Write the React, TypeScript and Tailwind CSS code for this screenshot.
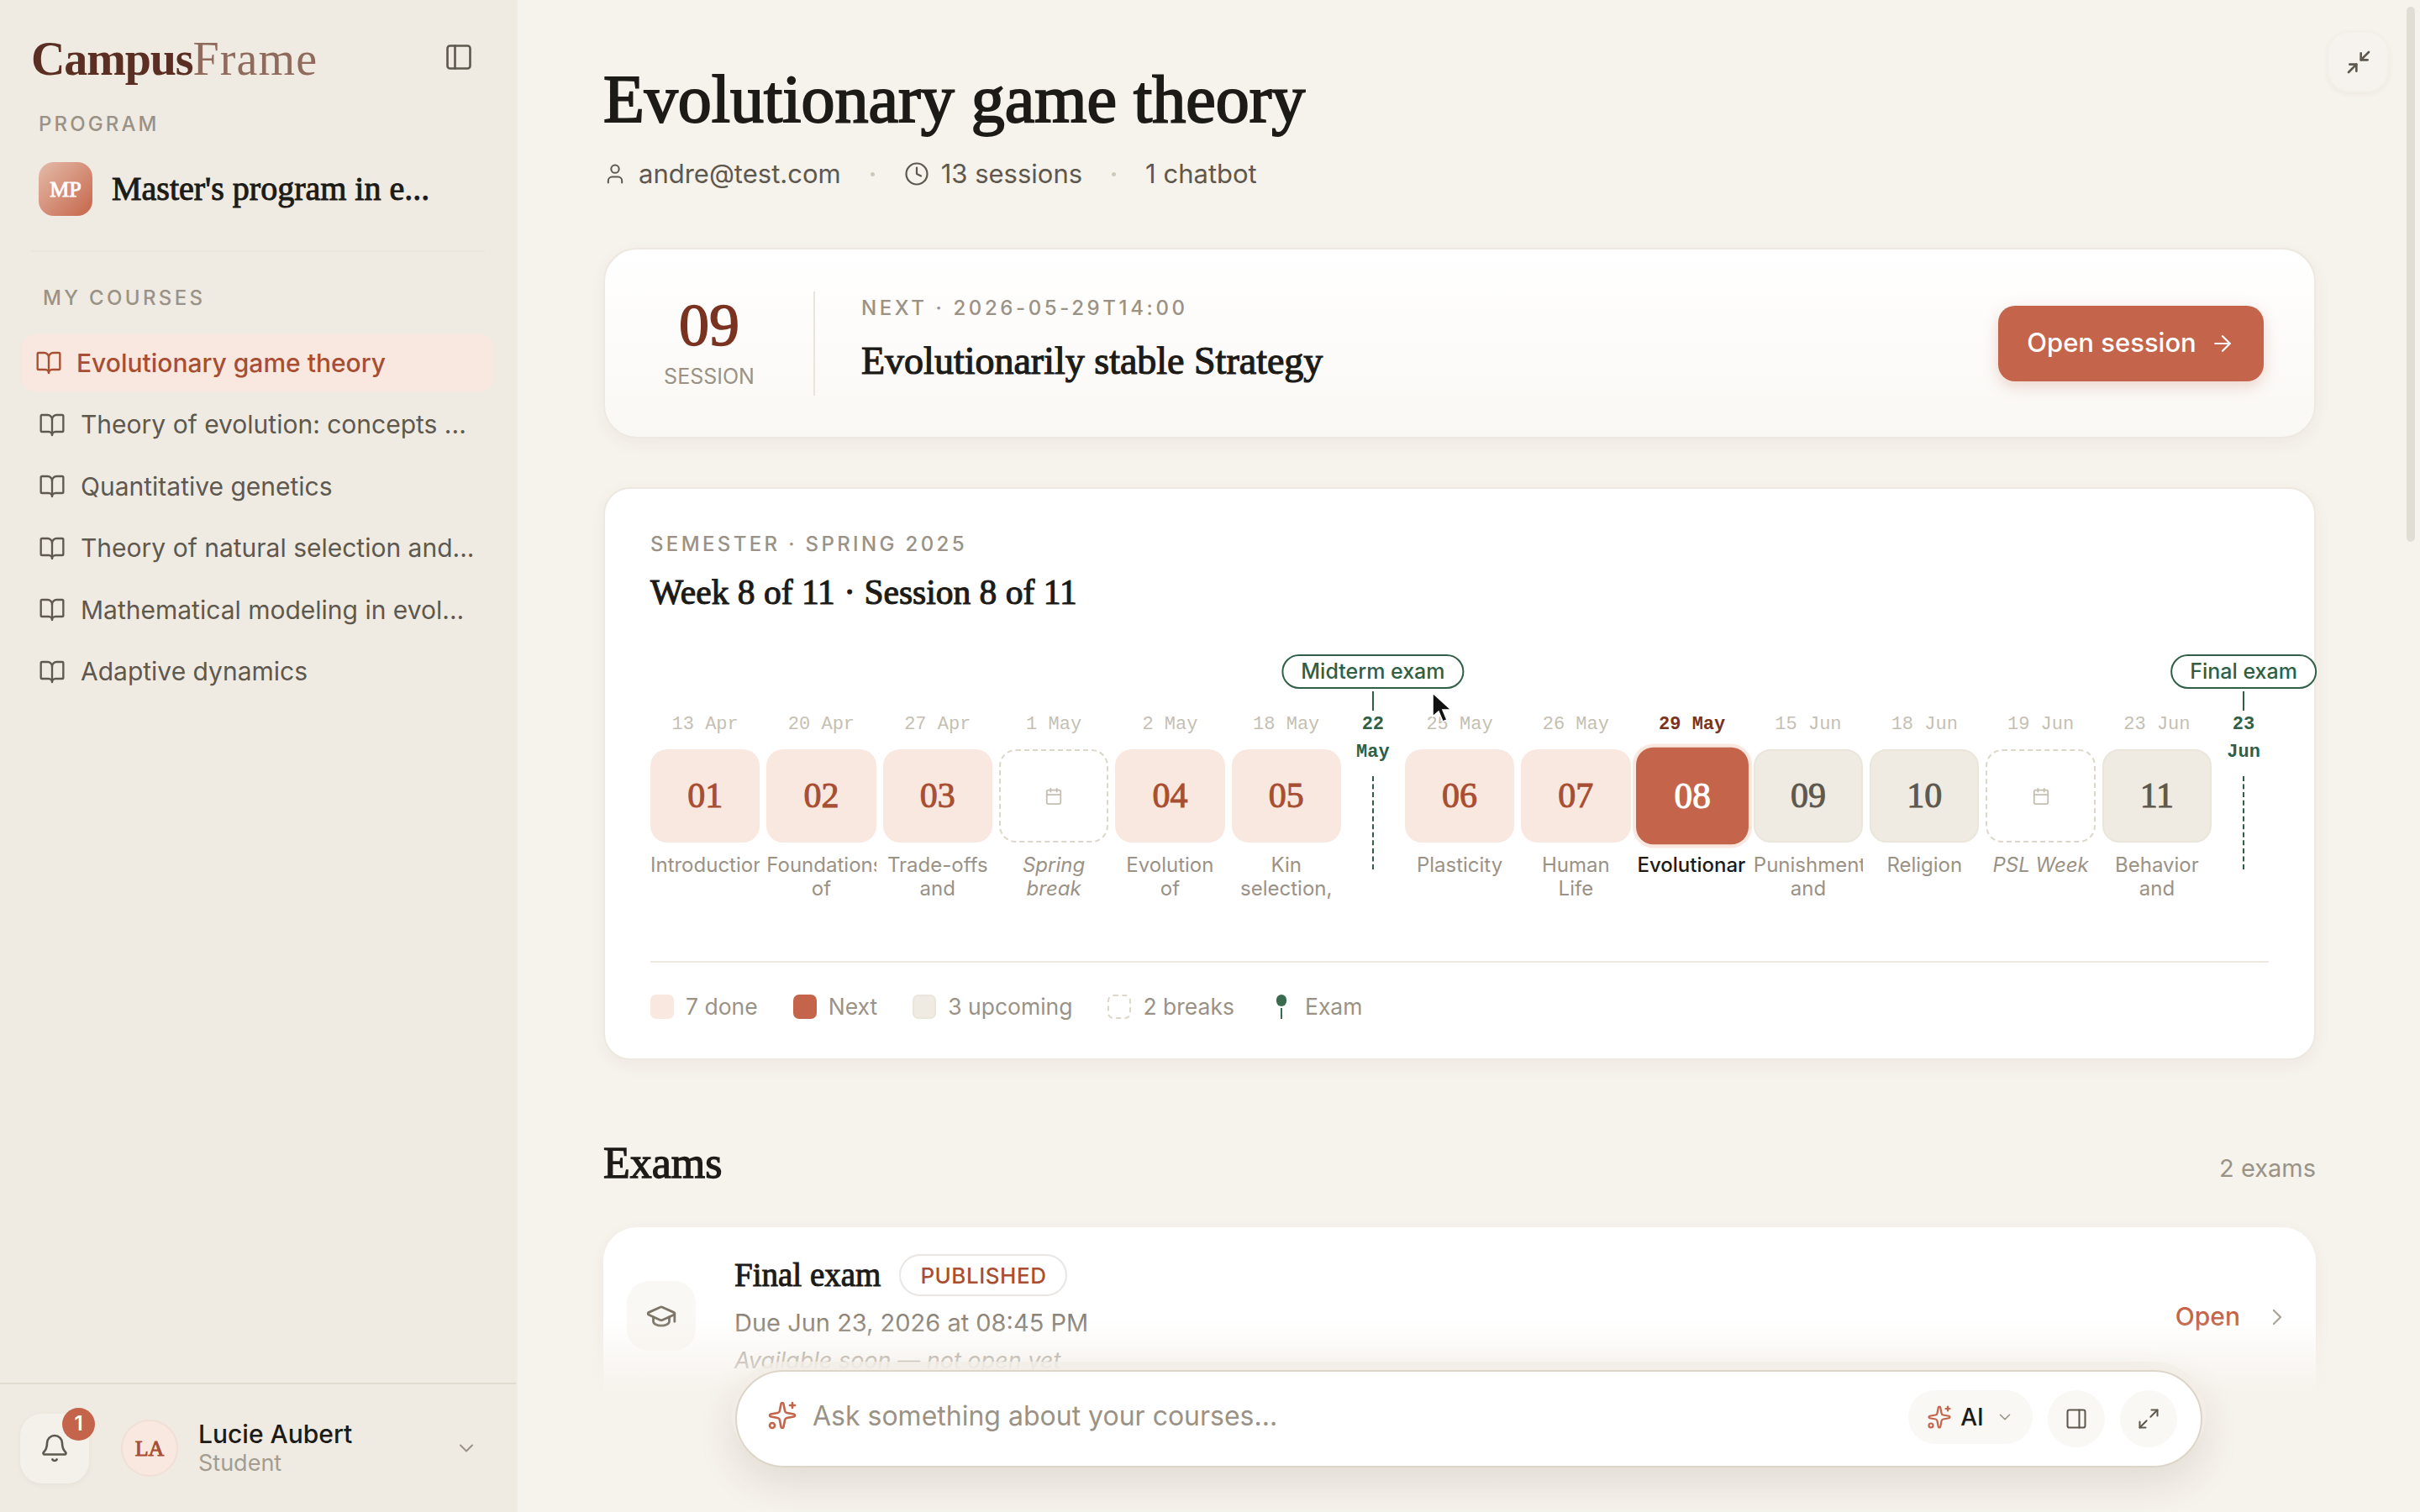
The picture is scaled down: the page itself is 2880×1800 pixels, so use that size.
import {
  ArrowRight,
  Bell,
  BookOpen,
  Calendar,
  ChevronDown,
  ChevronRight,
  Clock,
  GraduationCap,
  Maximize2,
  Minimize2,
  PanelLeft,
  PanelRight,
  Sparkles,
  User,
} from "lucide-react";

const SERIF = "font-['Liberation_Serif',serif] font-normal";
const MONO = "font-['Liberation_Mono',monospace]";

const courses = [
  "Evolutionary game theory",
  "Theory of evolution: concepts ...",
  "Quantitative genetics",
  "Theory of natural selection and...",
  "Mathematical modeling in evol...",
  "Adaptive dynamics",
];

type Cell =
  | { kind: "done" | "next" | "todo"; n: string; date: string; title: string }
  | { kind: "break"; date: string; title: string }
  | { kind: "exam"; day: string; month: string; label: string };

const cells: Cell[] = [
  { kind: "done", n: "01", date: "13 Apr", title: "Introduction" },
  { kind: "done", n: "02", date: "20 Apr", title: "Foundations of" },
  { kind: "done", n: "03", date: "27 Apr", title: "Trade-offs and" },
  { kind: "break", date: "1 May", title: "Spring break" },
  { kind: "done", n: "04", date: "2 May", title: "Evolution of" },
  { kind: "done", n: "05", date: "18 May", title: "Kin selection," },
  { kind: "exam", day: "22", month: "May", label: "Midterm exam" },
  { kind: "done", n: "06", date: "25 May", title: "Plasticity" },
  { kind: "done", n: "07", date: "26 May", title: "Human\nLife" },
  { kind: "next", n: "08", date: "29 May", title: "Evolutionarily" },
  { kind: "todo", n: "09", date: "15 Jun", title: "Punishment and" },
  { kind: "todo", n: "10", date: "18 Jun", title: "Religion" },
  { kind: "break", date: "19 Jun", title: "PSL Week" },
  { kind: "todo", n: "11", date: "23 Jun", title: "Behavior and" },
  { kind: "exam", day: "23", month: "Jun", label: "Final exam" },
];

function TimelineCell({ cell }: { cell: Cell }) {
  if (cell.kind === "exam") {
    return (
      <div className="relative flex w-[60px] shrink-0 flex-col items-center">
        <span className="absolute top-[-67px] left-1/2 flex h-[41px] -translate-x-1/2 items-center rounded-full border-2 border-[#2F5F46] bg-white px-[21px] text-[25px] font-medium whitespace-nowrap text-[#2F5F46]">
          {cell.label}
        </span>
        <span className="absolute top-[-23px] left-1/2 h-[23px] w-[2px] -translate-x-1/2 bg-[#2F5F46]" />
        <span className={`${MONO} text-center text-[22px] leading-[33px] font-bold text-[#2F5F46]`}>
          {cell.day}
          <br />
          {cell.month}
        </span>
        <span className="mt-[12px] h-[111px] border-l-2 border-dashed border-[#2F5F46]" />
      </div>
    );
  }

  const isNext = cell.kind === "next";
  const isBreak = cell.kind === "break";

  return (
    <div className="min-w-0 flex-1 basis-0">
      <div
        className={`${MONO} h-[33px] text-center text-[22px] leading-[33px] ${
          isNext ? "font-bold text-[#7A3320]" : "text-[#C5BFB3]"
        }`}
      >
        {cell.date}
      </div>
      <div className="mt-[13px]">
        {cell.kind === "done" && (
          <div className={`${SERIF} flex h-[111px] items-center justify-center rounded-[20px] bg-[#F8E8E0] text-[42px] text-[#A84E32] [-webkit-text-stroke:1px]`}>
            {cell.n}
          </div>
        )}
        {isNext && (
          <div className={`${SERIF} flex h-[111px] scale-x-[1.03] scale-y-[1.04] items-center justify-center rounded-[20px] bg-[#C4654B] text-[42px] text-white ring-4 ring-[#F8E8E0] [-webkit-text-stroke:1px]`}>
            {"n" in cell ? cell.n : ""}
          </div>
        )}
        {cell.kind === "todo" && (
          <div className={`${SERIF} flex h-[111px] items-center justify-center rounded-[20px] border-2 border-[#EAE6DA] bg-[#EFEBE3] text-[42px] text-[#5E584E] [-webkit-text-stroke:1px]`}>
            {cell.n}
          </div>
        )}
        {isBreak && (
          <div className="flex h-[111px] items-center justify-center rounded-[20px] border-2 border-dashed border-[#DDD7CA] text-[#C5BFB3]">
            <Calendar size={22} strokeWidth={2} />
          </div>
        )}
      </div>
      <div
        className={`mt-[13px] h-[56px] overflow-hidden text-center text-[24px] leading-[28px] whitespace-pre-line ${
          isNext ? "font-medium text-[#1C1B18]" : "text-[#9A9286]"
        } ${isBreak ? "italic" : ""}`}
      >
        {cell.title}
      </div>
    </div>
  );
}

function LegendItem({ swatch, label }: { swatch: string; label: string }) {
  return (
    <div className="flex items-center gap-[14px]">
      <span className={`h-[29px] w-[28px] rounded-[7px] ${swatch}`} />
      <span className="text-[26.5px] leading-[29px] text-[#9A9286]">{label}</span>
    </div>
  );
}

export default function App() {
  return (
    <div className="relative flex h-screen w-full overflow-hidden bg-[#F6F2EC] font-['Inter',sans-serif] text-[#1C1B18]">
      <aside className="flex w-[616px] shrink-0 flex-col border-r-2 border-[#F1EDE5] bg-[#EFEBE3]">
        <div className="flex h-[130px] items-start justify-between pt-[40px] pr-[50px] pl-[37px]">
          <span className="font-['Liberation_Serif',serif] text-[56px] leading-[60px]">
            <span className="font-bold tracking-[-0.02em] text-[#5A2E22]">Campus</span>
            <span className="tracking-[0.02em] text-[#8F6B5E]">Frame</span>
          </span>
          <PanelLeft size={36} strokeWidth={1.75} className="mt-[10px] text-[#5E584E]" />
        </div>

        <div className="pl-[46px] text-[24px] leading-[36px] font-medium tracking-[0.13em] text-[#9A9286]">
          PROGRAM
        </div>

        <div className="mt-[27px] flex items-center gap-[23px] pl-[46px]">
          <span className={`${SERIF} flex h-[64px] w-[64px] items-center justify-center rounded-[18px] bg-linear-to-br from-[#E3BBA8] to-[#C4654B] text-[26px] text-white [-webkit-text-stroke:0.9px]`}>
            MP
          </span>
          <span className={`${SERIF} text-[40px] [-webkit-text-stroke:1px]`}>Master's program in e...</span>
        </div>

        <div className="mx-[37px] mt-[41px] h-[2px] bg-[#EAE6DA]" />

        <div className="mt-[37px] pl-[51px] text-[24px] leading-[36px] font-medium tracking-[0.14em] text-[#9A9286]">
          MY COURSES
        </div>

        <nav className="mx-[26px] mt-[25px] flex flex-col gap-[5.5px]">
          {courses.map((name, i) => (
            <div
              key={name}
              className={`flex h-[68px] items-center rounded-[16px] text-[30px] whitespace-nowrap ${
                i === 0
                  ? "gap-[17px] bg-[#F8E8E0] pl-[16px] font-medium text-[#A84E32]"
                  : "gap-[18px] pl-[20px] text-[#5E584E]"
              }`}
            >
              <BookOpen size={32} strokeWidth={1.75} className="shrink-0" />
              <span>{name}</span>
            </div>
          ))}
        </nav>

        <div className="mt-auto flex h-[154px] items-center border-t-2 border-[#E0DBCF] pl-[24px]">
          <div className="relative flex h-[83px] w-[82px] items-center justify-center rounded-[26px] bg-[#F4F1EA] text-[#5E584E] shadow-[0_2px_6px_rgba(90,70,50,0.06)]">
            <Bell size={36} strokeWidth={1.75} />
            <span className="absolute top-[-7px] right-[-7px] flex h-[39px] w-[39px] items-center justify-center rounded-full bg-[#C4654B] text-[24px] font-semibold text-white">
              1
            </span>
          </div>
          <span className={`${SERIF} ml-[38px] flex h-[68px] w-[68px] items-center justify-center rounded-full border-2 border-[#F1DFD6] bg-[#F8E8E0] text-[26px] text-[#A84E32] [-webkit-text-stroke:0.9px]`}>
            LA
          </span>
          <div className="ml-[24px]">
            <div className="text-[30px] leading-[36px] font-medium">Lucie Aubert</div>
            <div className="text-[27px] leading-[34px] text-[#A39C90]">Student</div>
          </div>
          <ChevronDown size={28} strokeWidth={1.75} className="mr-[45px] ml-auto text-[#9A9286]" />
        </div>
      </aside>

      <main className="relative min-w-0 flex-1">
        <div className="box-content w-[2038px] pt-[70px] pl-[102px]">
          <h1 className={`${SERIF} text-[80px] leading-[96px] [-webkit-text-stroke:2px]`}>
            Evolutionary game theory
          </h1>

          <div className="mt-[21px] flex h-[40px] items-center gap-[35px] text-[31px] text-[#5E584E]">
            <span className="flex items-center gap-[14px]">
              <User size={28} strokeWidth={1.75} />
              andre@test.com
            </span>
            <span className="h-[5px] w-[5px] rounded-full bg-[#CFC9BC]" />
            <span className="flex items-center gap-[14px]">
              <Clock size={30} strokeWidth={1.75} />
              13 sessions
            </span>
            <span className="h-[5px] w-[5px] rounded-full bg-[#CFC9BC]" />
            <span>1 chatbot</span>
          </div>

          <section className="mt-[68px] flex h-[227px] items-center rounded-[40px] border-2 border-[#EDE9E0] bg-linear-to-b from-white to-[#FAF8F4] pr-[60px] shadow-[0_6px_20px_rgba(90,70,50,0.05)]">
            <div className="flex h-[124px] w-[250px] flex-col items-center justify-center border-r-2 border-[#E9E5DC]">
              <span className={`${SERIF} -mt-[4px] text-[72px] leading-[74px] text-[#7A3320] [-webkit-text-stroke:1.5px]`}>09</span>
              <span className="mt-[8px] text-[25px] leading-[32px] text-[#9A9286]">SESSION</span>
            </div>
            <div className="-mt-[9px] ml-[55px]">
              <div className="text-[24px] leading-[32px] font-medium tracking-[0.15em] text-[#9A9286]">
                NEXT · 2026-05-29T14:00
              </div>
              <div className={`${SERIF} mt-[20px] text-[46px] leading-[54px] [-webkit-text-stroke:1.2px]`}>
                Evolutionarily stable Strategy
              </div>
            </div>
            <button className="ml-auto flex h-[90px] w-[316px] items-center justify-center gap-[16px] rounded-[20px] bg-[#C4654B] text-[31px] font-medium text-white shadow-[0_6px_18px_rgba(196,101,75,0.25)]">
              Open session
              <ArrowRight size={30} strokeWidth={1.75} />
            </button>
          </section>

          <section className="mt-[58px] h-[682px] rounded-[32px] border-2 border-[#EDE9E0] bg-white px-[54px] pt-[50px] shadow-[0_6px_20px_rgba(90,70,50,0.05)]">
            <div className="text-[24px] leading-[32px] font-medium tracking-[0.14em] text-[#9A9286]">
              SEMESTER · SPRING 2025
            </div>
            <div className={`${SERIF} mt-[16px] text-[41.5px] leading-[50px] [-webkit-text-stroke:1.1px]`}>
              Week 8 of 11 · Session 8 of 11
            </div>

            <div className="mt-[116px] flex gap-[8px]">
              {cells.map((cell, i) => (
                <TimelineCell key={i} cell={cell} />
              ))}
            </div>

            <div className="mt-[72px] h-[2px] bg-[#EDE9E0]" />

            <div className="mt-[38px] flex items-center gap-[42px]">
              <LegendItem swatch="bg-[#F8E8E0]" label="7 done" />
              <LegendItem swatch="bg-[#C4654B]" label="Next" />
              <LegendItem swatch="bg-[#EFEBE3] border-2 border-[#EAE6DA]" label="3 upcoming" />
              <LegendItem swatch="border-2 border-dashed border-[#DDD7CA]" label="2 breaks" />
              <div className="flex items-center gap-[14px]">
                <span className="flex h-[29px] w-[28px] flex-col items-center">
                  <span className="h-[14px] w-[12px] rounded-full bg-[#3A6B50]" />
                  <span className="mt-[2px] h-[13px] w-[2px] bg-[#3A6B50]" />
                </span>
                <span className="text-[26.5px] leading-[29px] text-[#9A9286]">Exam</span>
              </div>
            </div>
          </section>

          <div className="mt-[93px] flex items-center justify-between">
            <h2 className={`${SERIF} text-[52px] leading-[60px] [-webkit-text-stroke:1.3px]`}>Exams</h2>
            <span className="mt-[12px] text-[29px] text-[#9A9286]">2 exams</span>
          </div>

          <section className="mt-[46px] flex h-[300px] items-start rounded-[40px] bg-white pt-[32px] pr-[30px] pl-[28px] shadow-[0_6px_20px_rgba(90,70,50,0.05)]">
            <div className="mt-[32px] flex h-[83px] w-[82px] items-center justify-center rounded-[26px] bg-[#FAF8F4] text-[#7C7568]">
              <GraduationCap size={38} strokeWidth={1.75} />
            </div>
            <div className="ml-[46px]">
              <div className="flex h-[50px] items-center gap-[22px]">
                <span className={`${SERIF} text-[39px] [-webkit-text-stroke:1px]`}>Final exam</span>
                <span className="flex h-[50px] items-center rounded-full border-2 border-[#E9E6E4] px-[23px] text-[26px] font-medium tracking-[0.02em] text-[#A84E32]">
                  PUBLISHED
                </span>
              </div>
              <div className="mt-[13px] text-[29px] leading-[38px] text-[#8C8478]">
                Due Jun 23, 2026 at 08:45 PM
              </div>
              <div className="mt-[9px] text-[27px] leading-[34px] text-[#9A9286] italic">
                Available soon — not open yet
              </div>
            </div>
            <div className="mt-[52px] ml-auto flex items-center gap-[28px]">
              <span className="text-[30px] font-medium text-[#C4654B]">Open</span>
              <ChevronRight size={32} strokeWidth={1.75} className="text-[#AAA49A]" />
            </div>
          </section>
        </div>

        {/* fade of the page under the floating input */}
        <div className="pointer-events-none absolute right-0 bottom-0 left-0 h-[230px] bg-linear-to-b from-[#F6F2EC00] from-0% to-[#F6F2EC] to-38%" />

        <div className="absolute top-[37px] right-[37px] flex h-[73px] w-[73px] items-center justify-center rounded-[26px] border-2 border-[#F3F0E9] bg-[#F6F3EE] text-[#5E584E] shadow-[0_2px_6px_rgba(90,70,50,0.05)]">
          <Minimize2 size={32} strokeWidth={2} />
        </div>

        <div className="absolute top-[8px] right-[6px] h-[637px] w-[10px] rounded-full bg-[#E0DDD5]" />

        <div className="absolute bottom-[53px] left-[259px] flex h-[116px] w-[1746px] items-start rounded-[58px] border-2 border-[#DDD6C8] bg-white pt-[22px] pr-[28px] pl-[36px] shadow-[0_-6px_0_4px_rgba(243,238,231,0.8),0_16px_48px_rgba(90,70,50,0.14)]">
          <Sparkles size={36} strokeWidth={1.75} className="mt-[12px] shrink-0 text-[#C4654B]" />
          <span className="mt-[12px] ml-[18px] text-[32px] leading-[38px] text-[#9A9286]">
            Ask something about your courses...
          </span>
          <div className="ml-auto flex items-start gap-[18px]">
            <div className="flex h-[64px] w-[148px] items-center justify-center gap-[10px] rounded-full bg-[#FAF8F4]">
              <Sparkles size={30} strokeWidth={1.75} className="text-[#C4654B]" />
              <span className="text-[28px] font-medium">AI</span>
              <ChevronDown size={22} strokeWidth={1.75} className="ml-[4px] text-[#9A9286]" />
            </div>
            <div className="flex h-[68px] w-[68px] items-center justify-center rounded-full bg-[#FAF8F4] text-[#5E584E]">
              <PanelRight size={28} strokeWidth={1.75} />
            </div>
            <div className="flex h-[68px] w-[68px] items-center justify-center rounded-full bg-[#FAF8F4] text-[#5E584E]">
              <Maximize2 size={28} strokeWidth={1.75} />
            </div>
          </div>
        </div>
      </main>

      {/* mouse pointer in the shot */}
      <svg
        className="absolute top-[823px] left-[1703px]"
        width="26"
        height="38"
        viewBox="0 0 13 19"
      >
        <path d="M1 1 L1 15 L4.5 12 L7 18 L9.5 17 L7 11 L12 11 Z" fill="#111" stroke="#fff" strokeWidth="0.8" />
      </svg>
    </div>
  );
}
